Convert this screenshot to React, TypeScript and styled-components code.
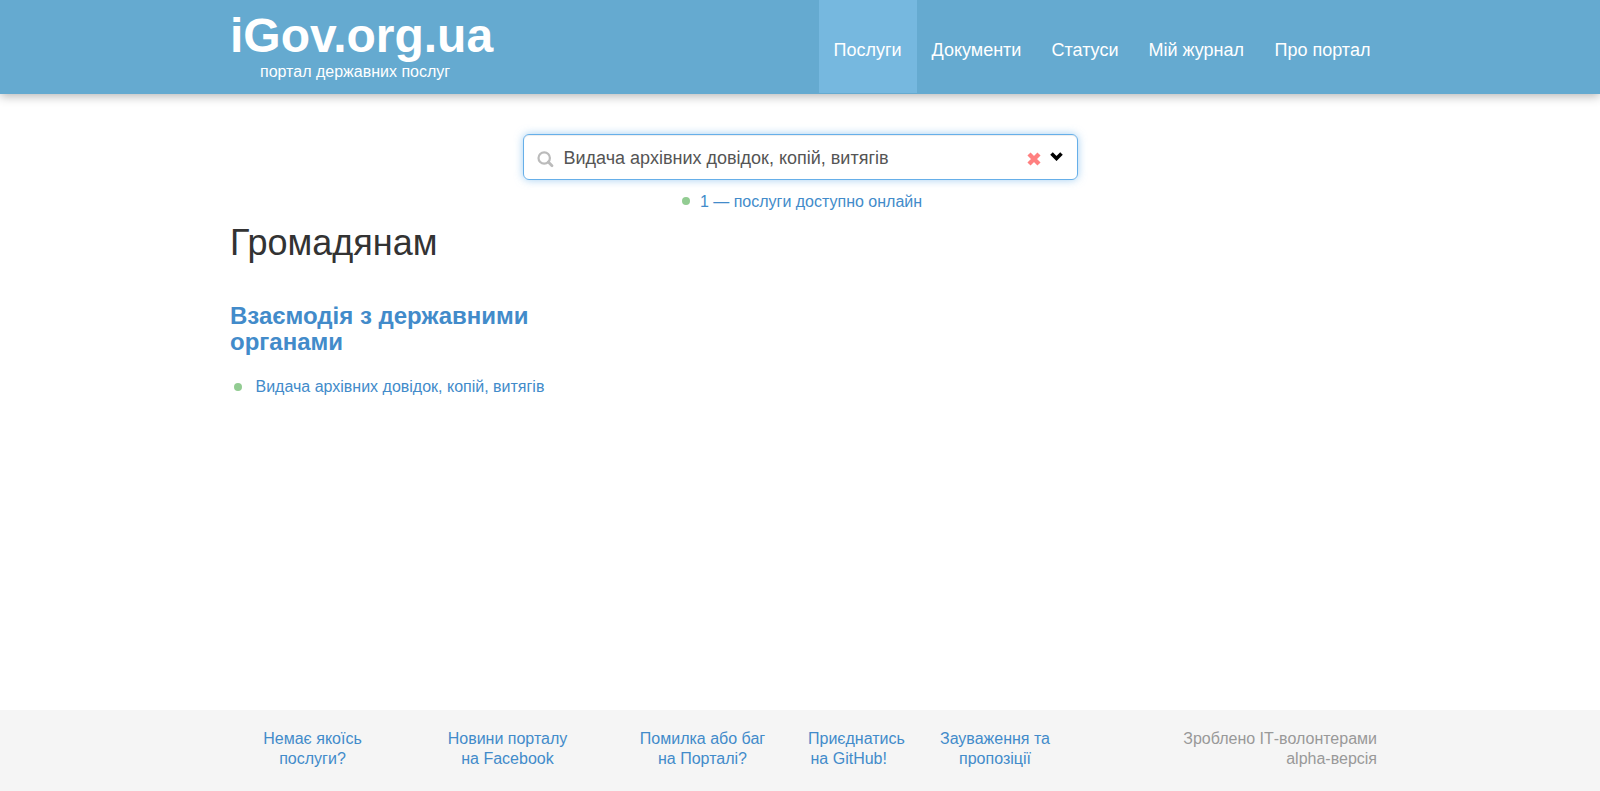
import React from "react";
import styled, { createGlobalStyle } from "styled-components";

const GlobalStyle = createGlobalStyle`
  * { box-sizing: border-box; }
  body {
    margin: 0;
    background: #fff;
    color: #333;
    font: 16px/20px Arial, "Liberation Sans", sans-serif;
  }
`;

const Page = styled.div`
  display: flex;
  flex-direction: column;
  height: 791px;
`;

const Header = styled.header`
  height: 94px;
  background: #65aad0;
  box-shadow: 0 2px 10px rgba(0, 0, 0, 0.3);
`;

const Container = styled.div`
  display: flex;
  width: 1170px;
  margin: 0 auto;
`;

const HeaderRow = styled(Container)`
  justify-content: space-between;
  padding-left: 15px;
`;

const Brand = styled.a`
  display: block;
  color: #fff;
`;

const BrandName = styled.div`
  padding-top: 9px;
  font-size: 48px;
  line-height: 53px;
  font-weight: bold;
`;

const Tagline = styled.div`
  padding-left: 30px;
`;

const Nav = styled.nav`
  display: flex;
  height: 93px;
`;

const NavLink = styled.a<{ $active?: boolean; $width: number }>`
  width: ${(p) => p.$width}px;
  padding: 40px 0 0 14.5px;
  color: #fff;
  font-size: 18px;
  white-space: nowrap;
  background: ${(p) => (p.$active ? "#76b8df" : "transparent")};
`;

const Main = styled.main`
  flex: 1;
  width: 1140px;
  margin: 0 auto;
`;

const SearchBox = styled.div`
  display: flex;
  align-items: center;
  width: 555px;
  height: 46px;
  margin: 40px auto 0;
  padding: 0 13px;
  border: 1px solid #66afe9;
  border-radius: 6px;
  box-shadow: inset 0 1px 1px rgba(0, 0, 0, 0.075), 0 0 8px rgba(102, 175, 233, 0.6);
`;

const SearchText = styled.span`
  flex: 1;
  margin-left: 10px;
  padding-top: 2px;
  color: #555;
  font-size: 18px;
  line-height: 24px;
`;

const ClearIcon = styled.svg`
  margin: 4px 9px 0 0;
`;

const ChevronIcon = styled.svg`
  margin: 0 1px 1px 0;
`;

const SearchIcon = styled.svg`
  margin-top: 5px;
`;

const Dot = styled.span`
  flex: none;
  width: 8px;
  height: 8px;
  border-radius: 50%;
  background: #92cc92;
`;

const OnlineCount = styled.div`
  display: flex;
  align-items: center;
  justify-content: center;
  gap: 10px;
  margin-top: 12px;
  padding-left: 4px;
  color: #428bca;

  ${Dot} {
    margin-bottom: 2px;
  }
`;

const Title = styled.h1`
  margin: 11px 0 0;
  font-size: 36px;
  line-height: 40px;
  font-weight: normal;
`;

const Category = styled.h3`
  width: 360px;
  margin: 40px 0 0;
  color: #428bca;
  font-size: 24px;
  line-height: 26.4px;
  font-weight: bold;
`;

const Service = styled.a`
  display: flex;
  align-items: center;
  gap: 13.5px;
  margin-top: 21px;
  padding-left: 4px;
  color: #428bca;
`;

const Footer = styled.footer`
  height: 81px;
  background: #f5f5f5;
`;

const FooterCell = styled.a<{ $width: number }>`
  display: flex;
  flex-direction: column;
  align-items: center;
  width: ${(p) => p.$width}px;
  padding-top: 19px;
  color: #428bca;
  white-space: nowrap;
`;

const OverflowLine = styled.span`
  align-self: flex-start;
  margin-left: 8px;
`;

const Credits = styled.div`
  flex: 1;
  padding: 19px 8px 0 0;
  color: #999;
  text-align: right;
`;

const nav = [
  { label: "Послуги", width: 98, active: true },
  { label: "Документи", width: 120 },
  { label: "Статуси", width: 97 },
  { label: "Мій журнал", width: 126 },
  { label: "Про портал", width: 125 },
];

export default function App() {
  return (
    <Page>
      <GlobalStyle />
      <Header>
        <HeaderRow>
          <Brand>
            <BrandName>iGov.org.ua</BrandName>
            <Tagline>портал державних послуг</Tagline>
          </Brand>
          <Nav>
            {nav.map((n) => (
              <NavLink key={n.label} $width={n.width} $active={n.active}>
                {n.label}
              </NavLink>
            ))}
          </Nav>
        </HeaderRow>
      </Header>
      <Main>
        <SearchBox>
          <SearchIcon width="17" height="17" viewBox="0 0 17 17" fill="none" stroke="#bbb">
            <circle cx="7.2" cy="7" r="5.7" strokeWidth="2.2" />
            <path d="M11.3 11l3.7 3.7" strokeWidth="2.8" strokeLinecap="round" />
          </SearchIcon>
          <SearchText>Видача архівних довідок, копій, витягів</SearchText>
          <ClearIcon width="14" height="14" viewBox="0 0 14 14">
            <path d="M2 2l10 10M12 2L2 12" stroke="#ff8080" strokeWidth="4.4" />
          </ClearIcon>
          <ChevronIcon width="13" height="9" viewBox="0 0 13 9">
            <path d="M1.5 1.5l5 5 5-5" fill="none" stroke="#000" strokeWidth="3.6" />
          </ChevronIcon>
        </SearchBox>
        <OnlineCount>
          <Dot />
          <span>1 — послуги доступно онлайн</span>
        </OnlineCount>
        <Title>Громадянам</Title>
        <Category>Взаємодія з державними органами</Category>
        <Service>
          <Dot />
          <span>Видача архівних довідок, копій, витягів</span>
        </Service>
      </Main>
      <Footer>
        <Container>
          <FooterCell $width={195}>
            <span>Немає якоїсь</span>
            <span>послуги?</span>
          </FooterCell>
          <FooterCell $width={195}>
            <span>Новини порталу</span>
            <span>на Facebook</span>
          </FooterCell>
          <FooterCell $width={195}>
            <span>Помилка або баг</span>
            <span>на Порталі?</span>
          </FooterCell>
          <FooterCell $width={97.5}>
            <OverflowLine>Приєднатись</OverflowLine>
            <span>на GitHub!</span>
          </FooterCell>
          <FooterCell $width={195}>
            <span>Зауваження та</span>
            <span>пропозіції</span>
          </FooterCell>
          <Credits>
            <div>Зроблено ІТ-волонтерами</div>
            <div>alpha-версія</div>
          </Credits>
        </Container>
      </Footer>
    </Page>
  );
}
